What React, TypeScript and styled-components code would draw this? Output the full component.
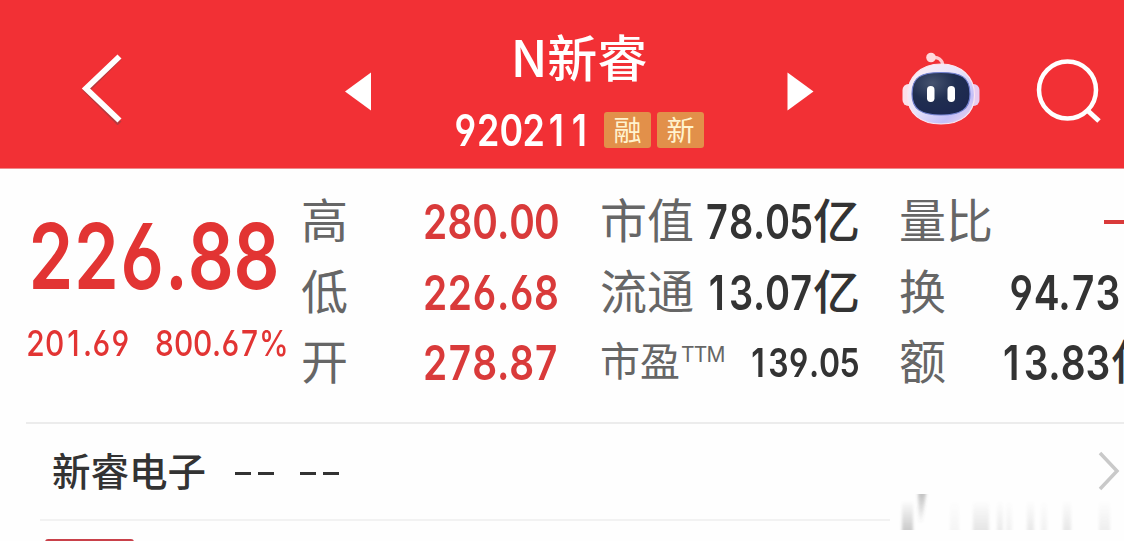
import React from "react";
import styled, { createGlobalStyle } from "styled-components";

const GlobalStyle = createGlobalStyle`
  * {
    box-sizing: border-box;
  }

  body {
    margin: 0;
    background: #fefefe;
    overflow: hidden;
  }
`;

const Page = styled.div`
  width: 1124px;
  height: 541px;
  overflow: hidden;
  background: #fefefe;
  color: #333;
  font-family: "Noto Sans CJK SC", sans-serif;
`;

const Header = styled.header`
  display: flex;
  align-items: flex-start;
  height: 169px;
  background: #f23035;
  border-bottom: 1px solid #ef8a8c;
`;

const IconSlot = styled.span<{ $left: number; $top: number }>`
  flex: none;
  display: flex;
  margin-left: ${(props) => props.$left}px;
  margin-top: ${(props) => props.$top}px;
`;

const Heading = styled.div`
  flex: none;
  width: 416px;
  display: flex;
  flex-direction: column;
  align-items: center;
  padding-top: 27px;
`;

const StockName = styled.h1`
  margin: 0 2px 0 0;
  color: #fff;
  font-size: 50px;
  line-height: 56px;
  font-weight: 500;
`;

const CodeRow = styled.div`
  display: flex;
  align-items: center;
  gap: 6px;
  margin-top: 29px;
  margin-right: 2px;
  height: 36px;
  color: #fff;
`;

const Tag = styled.span`
  width: 47px;
  height: 36px;
  border-radius: 3px;
  background: #e2904a;
  color: #fff3cf;
  font-size: 28px;
  line-height: 34px;
  text-align: center;
`;

const NumberBox = styled.span<{ $width: number; $align?: string }>`
  flex: none;
  display: flex;
  width: ${(props) => props.$width}px;
  justify-content: ${(props) =>
    props.$align === "right" ? "flex-end" : "flex-start"};
`;

interface DigitsProps {
  $size: number;
  $weight?: number;
  $scale?: number;
  $align?: string;
}

const DigitText = styled.span<DigitsProps>`
  flex: none;
  font-family: Inter, "Noto Sans CJK SC", sans-serif;
  font-feature-settings: "cv03", "cv04";
  font-size: ${(props) => props.$size}px;
  font-weight: ${(props) => props.$weight || 600};
  line-height: 1;
  white-space: nowrap;
  transform: scaleX(${(props) => props.$scale || 0.81});
  transform-origin: ${(props) => props.$align || "left"} center;
`;

// Every digit takes the same advance, the plain "1" included.
const Digit = styled.span`
  display: inline-block;
  width: 0.635em;
  text-align: center;
`;

const Digits: React.FC<DigitsProps & { children: string }> = function Digits({
  children,
  ...props
}) {
  return (
    <DigitText {...props}>
      {children
        .split("")
        .map((char, i) => (/\d/.test(char) ? <Digit key={i}>{char}</Digit> : char))}
    </DigitText>
  );
};

const Quote = styled.section`
  display: flex;
  height: 253px;
  padding: 17px 0 0 26px;
`;

const PriceBlock = styled.div`
  flex: none;
  width: 275px;
  color: #e23433;
`;

const Price = styled.div`
  display: flex;
  padding: 25px 0 0 2px;
`;

const Changes = styled.div`
  display: flex;
  margin-top: 23px;
`;

const Column = styled.dl<{ $width: number; $gap: number }>`
  flex: none;
  width: ${(props) => props.$width}px;
  margin: 0 ${(props) => props.$gap}px 0 0;
`;

const Row = styled.div`
  display: flex;
  align-items: center;
  justify-content: space-between;
  height: 70.5px;
`;

const Label = styled.dt<{ $small?: boolean }>`
  flex: none;
  display: flex;
  margin-top: -6px;
  color: #666;
  font-size: ${(props) => (props.$small ? 40 : 47)}px;
  line-height: 70px;
`;

const Superscript = styled.sup`
  margin: -1px 0 0 1px;
  font-family: Inter, sans-serif;
  font-size: 21px;
  font-weight: 400;
  letter-spacing: -0.8px;
  line-height: 64px;
`;

const Value = styled.dd<{ $red?: boolean }>`
  flex: none;
  display: flex;
  align-items: center;
  margin: 0;
  padding-top: 2px;
  color: ${(props) => (props.$red ? "#d93a3a" : "#333")};
`;

const Unit = styled.span`
  margin-top: -8px;
  font-size: 47px;
  font-weight: 500;
  line-height: 70px;
`;

const Dash = styled.span<{ $width: number; $height: number }>`
  width: ${(props) => props.$width}px;
  height: ${(props) => props.$height}px;
  background: currentColor;
`;

const CompanyRow = styled.section`
  display: flex;
  align-items: center;
  height: 97px;
  margin-left: 26px;
  padding: 0 4px 2px 26px;
  border-top: 2px solid #ececec;
`;

const CompanyName = styled.span`
  margin-top: -4px;
  font-size: 38.5px;
  font-weight: 500;
  line-height: 56px;
`;

const DashGroup = styled.span`
  display: flex;
  gap: 7px;
  margin: 5px 0 0 26px;

  &:nth-of-type(2) {
    margin-left: 29px;
  }
`;

const ChevronSlot = styled.span`
  display: flex;
  margin-left: auto;
`;

const Footer = styled.footer`
  position: relative;
  height: 22px;
  margin-left: 40px;
  padding: 20px 0 0 5px;
`;

const Divider = styled.div`
  position: absolute;
  top: 0;
  left: 0;
  width: 850px;
  height: 2px;
  background: #f2f2f2;
`;

const ActiveTab = styled.div`
  width: 89px;
  height: 8px;
  border-radius: 3px;
  background: #c9414a;
`;

const Smudge = styled.svg`
  position: absolute;
  top: -25px;
  left: 850px;
`;

const smudges = [
  { x: 12, y: 6, w: 11, h: 30, opacity: 0.3 },
  { x: 60, y: 6, w: 9, h: 30, opacity: 0.05 },
  { x: 83, y: 6, w: 16, h: 30, opacity: 0.14 },
  { x: 107, y: 6, w: 6, h: 30, opacity: 0.11 },
  { x: 116, y: 6, w: 6, h: 30, opacity: 0.07 },
  { x: 137, y: 6, w: 7, h: 30, opacity: 0.12 },
  { x: 151, y: 6, w: 6, h: 30, opacity: 0.07 },
  { x: 173, y: 6, w: 8, h: 30, opacity: 0.13 },
  { x: 209, y: 6, w: 11, h: 30, opacity: 0.09 },
];

const Robot = () => (
  <svg width="78" height="74" viewBox="0 0 78 74">
    <defs>
      <linearGradient id="shell" x1="0" y1="0" x2="1" y2="1">
        <stop offset="0" stopColor="#fff1f4" />
        <stop offset="0.45" stopColor="#e9e4fa" />
        <stop offset="0.75" stopColor="#c4bff8" />
        <stop offset="1" stopColor="#f7dbe8" />
      </linearGradient>
      <radialGradient id="visor" cx="0.35" cy="0.25" r="0.8">
        <stop offset="0" stopColor="#46536f" />
        <stop offset="0.5" stopColor="#202e50" />
        <stop offset="1" stopColor="#1c2750" />
      </radialGradient>
    </defs>
    <path
      d="M29 6C36 4 41 8 40.500 14"
      fill="none"
      stroke="#ffc9ce"
      strokeWidth="3.400"
    />
    <circle cx="29" cy="5.500" r="4.800" fill="#ffd9dc" />
    <rect x="0.500" y="32" width="12" height="22" rx="6" fill="#fbe0ea" />
    <rect x="65.500" y="32" width="12" height="22" rx="6" fill="#e8ccef" />
    <path
      d="M39 12C59 12 72.500 25 72.500 43C72.500 62 59 72 39 72C19 72 5.500 62 5.500 43C5.500 25 19 12 39 12Z"
      fill="url(#shell)"
      stroke="#fbe6f0"
      strokeWidth="1.200"
    />
    <path
      d="M39 20.500C59 20.500 68 25 68 42C68 57 59 63 39 63C19 63 10 57 10 42C10 25 19 20.500 39 20.500Z"
      fill="url(#visor)"
      stroke="#7180cf"
      strokeWidth="1.200"
    />
    <rect x="25" y="34" width="7.500" height="16" rx="3.700" fill="#fff" />
    <rect x="45.500" y="34" width="7.500" height="16" rx="3.700" fill="#fff" />
  </svg>
);

const App: React.FC = function App() {
  return (
    <Page>
      <GlobalStyle />
      <Header>
        <IconSlot $left={80} $top={53}>
          <svg width="44" height="72" viewBox="0 0 44 72">
            <path
              d="M39 3L6 36L39 69"
              transform="translate(0.500 1.500)"
              fill="none"
              stroke="#b8393d"
              strokeWidth="5.500"
            />
            <path
              d="M39.500 3.500L6 35.500L39.500 67.500"
              fill="none"
              stroke="#fff"
              strokeWidth="5.800"
            />
          </svg>
        </IconSlot>
        <IconSlot $left={221} $top={72}>
          <svg width="27" height="39" viewBox="0 0 27 39">
            <path d="M26 0.500V38.500L0 19.500Z" fill="#fff" />
          </svg>
        </IconSlot>
        <Heading>
          <StockName>N新睿</StockName>
          <CodeRow>
            <NumberBox $width={144}>
              <Digits $size={44} $scale={0.815}>
                920211
              </Digits>
            </NumberBox>
            <Tag>融</Tag>
            <Tag>新</Tag>
          </CodeRow>
        </Heading>
        <IconSlot $left={-1} $top={72}>
          <svg width="27" height="39" viewBox="0 0 27 39">
            <path d="M0.500 0.500V38.500L26.500 19.500Z" fill="#fff" />
          </svg>
        </IconSlot>
        <IconSlot $left={88} $top={52}>
          <Robot />
        </IconSlot>
        <IconSlot $left={56} $top={58}>
          <svg width="66" height="66" viewBox="0 0 66 66">
            <circle
              cx="31.500"
              cy="32"
              r="28.500"
              fill="none"
              stroke="#fff"
              strokeWidth="4.500"
            />
            <path d="M51 52L63 63" stroke="#fff" strokeWidth="5" />
          </svg>
        </IconSlot>
      </Header>

      <Quote>
        <PriceBlock>
          <Price>
            <Digits $size={91} $scale={0.79}>
              226.88
            </Digits>
          </Price>
          <Changes>
            <NumberBox $width={129}>
              <Digits $size={36} $weight={500} $scale={0.83}>
                201.69
              </Digits>
            </NumberBox>
            <Digits $size={36} $weight={500} $scale={0.83}>
              800.67%
            </Digits>
          </Changes>
        </PriceBlock>

        <Column $width={258} $gap={41}>
          {[
            ["高", "280.00"],
            ["低", "226.68"],
            ["开", "278.87"],
          ].map(([label, value]) => (
            <Row key={label}>
              <Label>{label}</Label>
              <Value $red>
                <Digits $size={48} $align="right">
                  {value}
                </Digits>
              </Value>
            </Row>
          ))}
        </Column>

        <Column $width={260} $gap={39}>
          {[
            ["市值", "78.05"],
            ["流通", "13.07"],
          ].map(([label, value]) => (
            <Row key={label}>
              <Label>{label}</Label>
              <Value>
                <NumberBox $width={108} $align="right">
                  <Digits $size={48} $scale={0.79} $align="right">
                    {value}
                  </Digits>
                </NumberBox>
                <Unit>亿</Unit>
              </Value>
            </Row>
          ))}
          <Row>
            <Label $small>
              市盈<Superscript>TTM</Superscript>
            </Label>
            <Value>
              <NumberBox $width={110} $align="right">
                <Digits $size={40} $scale={0.8} $align="right">
                  139.05
                </Digits>
              </NumberBox>
            </Value>
          </Row>
        </Column>

        <Column $width={262} $gap={0}>
          <Row>
            <Label>量比</Label>
            <Value $red>
              <Dash $width={57} $height={4} />
            </Value>
          </Row>
          <Row>
            <Label>换</Label>
            <Value>
              <NumberBox $width={152}>
                <Digits $size={48}>94.73</Digits>
              </NumberBox>
            </Value>
          </Row>
          <Row>
            <Label>额</Label>
            <Value>
              <NumberBox $width={112}>
                <Digits $size={48}>13.83</Digits>
              </NumberBox>
              <Unit>亿</Unit>
              <NumberBox $width={3} />
            </Value>
          </Row>
        </Column>
      </Quote>

      <CompanyRow>
        <CompanyName>新睿电子</CompanyName>
        <DashGroup>
          <Dash $width={16} $height={3} />
          <Dash $width={16} $height={3} />
        </DashGroup>
        <DashGroup>
          <Dash $width={16} $height={3} />
          <Dash $width={16} $height={3} />
        </DashGroup>
        <ChevronSlot>
          <svg width="22" height="40" viewBox="0 0 22 40">
            <path
              d="M2 2L19 20L2 38"
              fill="none"
              stroke="#c9c9c9"
              strokeWidth="3.500"
            />
          </svg>
        </ChevronSlot>
      </CompanyRow>

      <Footer>
        <Divider />
        <ActiveTab />
        <Smudge width="234" height="40" viewBox="0 0 234 40">
          <defs>
            <linearGradient id="fade" x1="0" y1="0" x2="0" y2="1">
              <stop offset="0" stopColor="#555" stopOpacity="0" />
              <stop offset="1" stopColor="#555" />
            </linearGradient>
            <linearGradient id="fadeDown" x1="0" y1="0" x2="0" y2="1">
              <stop offset="0" stopColor="#555" stopOpacity="0.350" />
              <stop offset="1" stopColor="#555" stopOpacity="0" />
            </linearGradient>
            <filter id="soft" x="-50%" width="200%">
              <feGaussianBlur stdDeviation="1.800 0" />
            </filter>
          </defs>
          <path
            d="M28 0H36L32 30H29Z"
            fill="url(#fadeDown)"
            filter="url(#soft)"
          />
          {smudges.map((s) => (
            <rect
              key={s.x}
              x={s.x}
              y={s.y}
              width={s.w}
              height={s.h}
              opacity={s.opacity}
              fill="url(#fade)"
              filter="url(#soft)"
            />
          ))}
        </Smudge>
      </Footer>
    </Page>
  );
};

export default App;
